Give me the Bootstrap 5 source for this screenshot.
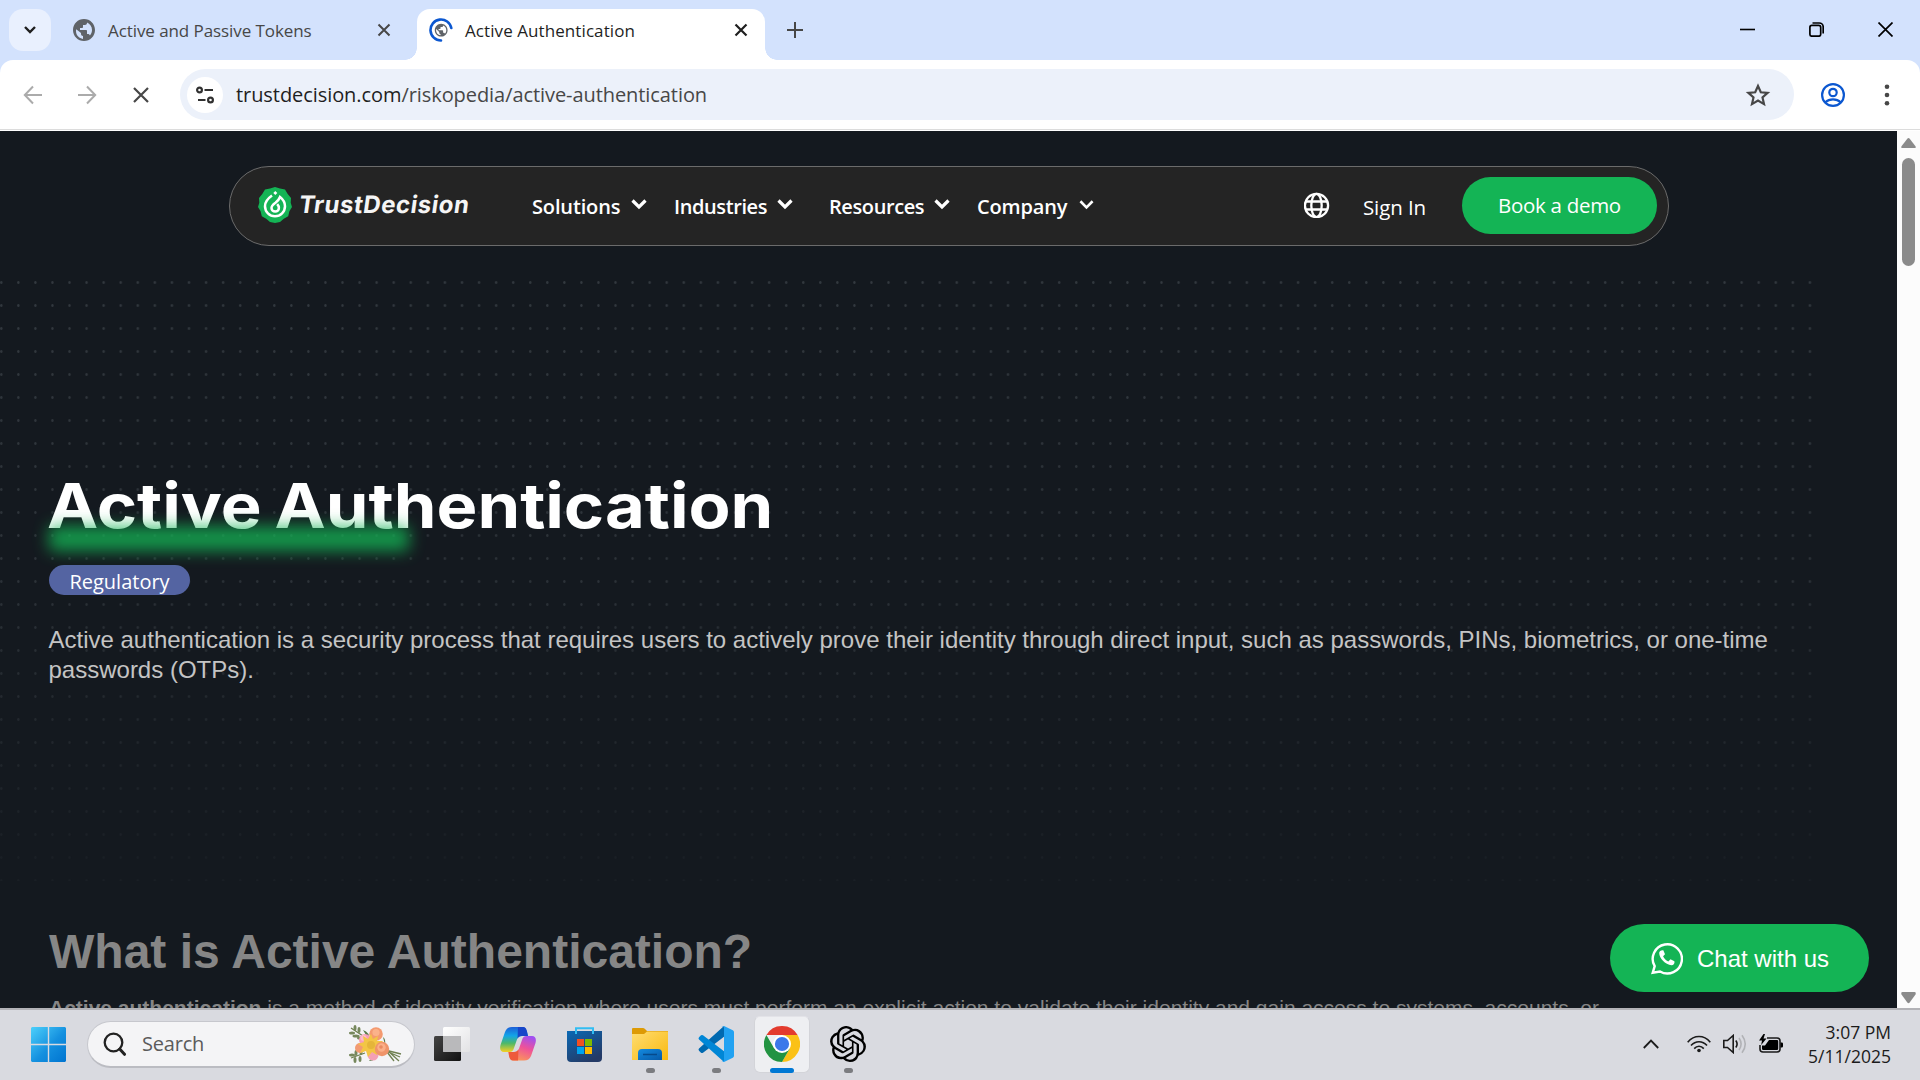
<!DOCTYPE html>
<html lang="en">
<head>
<meta charset="utf-8">
<title>Active Authentication</title>
<link href="https://cdn.jsdelivr.net/npm/bootstrap@5.3.0/dist/css/bootstrap.min.css" rel="stylesheet">
<style>
html,body{height:100%;overflow:hidden}
body{font-family:"Open Sans","Noto Sans",sans-serif;width:1920px;height:1080px;background:#14191f}
svg{display:block;flex:none}
.w-strip{height:60px;background:#d3e2fd;padding-left:9px}
.tab-menu{width:42px;height:42px;margin-top:9px;border-radius:14px;background:#e9f0fe}
.w-tab{height:51px;margin-top:9px;font-size:17px;color:#474747;padding-bottom:9px}
.w-tab span{letter-spacing:-.08px;padding-top:2px}
.tab-one{width:366px;padding-left:21px;padding-right:26px}
.tab-two{width:348px;background:#fff;border-radius:13px 13px 0 0;color:#1f1f1f;position:relative;padding-left:12px;padding-right:17px}
.tab-two span{letter-spacing:.08px}
.tab-two::before,.tab-two::after{content:"";position:absolute;bottom:0;width:12px;height:12px}
.tab-two::before{left:-12px;background:radial-gradient(circle at 0 0,transparent 11.5px,#fff 12px)}
.tab-two::after{right:-12px;background:radial-gradient(circle at 100% 0,transparent 11.5px,#fff 12px)}
.new-tab{margin:22px 0 0 22px}
.w-ctrl{gap:54px;padding-right:27px;padding-bottom:2px}
.w-toolwrap{background:#d3e2fd}
.w-tool{height:70px;background:#fff;border-radius:13px 13px 0 0;border-bottom:1px solid #dcdcdc;padding:0 21px 0 21px}
.w-tool>svg{margin-right:30px}
.w-tool>svg.profile{margin:0 36px 0 27px}
.omni{width:1614px;height:51px;border-radius:26px;background:#ecf1fa;margin-left:-3px;padding-left:7px;padding-right:23px;font-size:20px;color:#474747}
.omni b{font-weight:400;color:#1f1f1f}
.omni .addr{letter-spacing:-.07px;margin-left:13px}
.site-info{width:36px;height:36px;border-radius:50%;background:#fff}
.w-page{height:878px;border-top:1px solid #fff}
.doc{width:1897px;background:#14191f;position:relative;overflow:hidden}
.scroller{width:23px;background:#fcfcfc;padding:7px 0 4px}
.thumb{width:13px;height:108px;border-radius:7px;background:#8b8b8b;margin-top:10px}
.site-nav{width:1440px;height:80px;margin:35px 0 0 229px;border:1px solid #6b6b6b;border-radius:40px;background:#242424;color:#fff;padding:0 11px 2px 28px}
.logo-word{font-family:"Inter",sans-serif;font-weight:700;font-size:24px;letter-spacing:.55px;margin-left:7px;width:233px;line-height:34px;color:#f5f5f5;white-space:nowrap}
.logo-word span{display:inline-block;transform:skewX(-8deg)}
.menu-item{font-weight:600;font-size:20px}
.menu-item span{padding-top:4px;letter-spacing:-.4px}
.mi-a{width:142px}.mi-a span{width:99px}
.mi-b{width:155px}.mi-b span{width:103px}
.mi-c{width:148px}.mi-c span{width:105px}
.mi-d{width:125px}.mi-d span{width:102px}
.mi-a span,.mi-d span{letter-spacing:-.15px}
.sign-in{font-size:20.5px;letter-spacing:-.1px;margin:4px 36px 0 33px}
.demo-btn{width:195px;height:57px;border-radius:29px;background:#14b455;color:#fff;font-size:20.5px;letter-spacing:-.3px}
.dots{position:absolute;left:0;top:140px;width:1813px;height:610px;background-image:radial-gradient(ellipse 1.6px 2px at 1.3px 11.5px,#33393f 45%,transparent 100%);background-size:17.07px 23px;-webkit-mask-image:linear-gradient(#000,#000c 50%,#0003 97%);mask-image:linear-gradient(#000,#000c 50%,#0003 97%)}
.hero{margin-top:220px;padding-left:49px;position:relative}
.hero h1{font:700 62px/80px "Inter",sans-serif;word-spacing:-3px;color:#fff;margin:0 0 0 -2px;transform:scaleX(1.107);transform-origin:0 0;width:max-content;white-space:nowrap}
.glow{position:absolute;left:49px;top:60px;width:360px;height:25px;background:#14b455;opacity:.8;filter:blur(8px);border-radius:4px}
.topic{width:141px;height:30px;border-radius:15px;background:#5464a2;color:#fff;font-size:20px;margin-top:19px;padding-top:3px}
.intro{font:24px/30px "Liberation Sans",Arial,sans-serif;color:#c4c4c4;margin:30px 0 0 -.5px;width:1740px}
.what{font:700 48px/56px "Liberation Sans",Arial,sans-serif;color:#868686;margin:239px 0 13px}
.body-copy{font:21px/30px "Liberation Sans",Arial,sans-serif;color:#868686;white-space:nowrap;margin:0}
.chat{position:absolute;left:1610px;top:793px;width:259px;height:68px;border-radius:34px;background:#14b455;color:#fff;font:24px "Liberation Sans",Arial,sans-serif;padding-left:41px;gap:14px}
.chat span{padding-top:2px}
.tb{height:72px;border-top:2px solid #b3b3b7;background:#d9dae0;padding-left:31px;padding-bottom:2px;color:#1b1b1b}
.tb-search{width:328px;height:47px;border-radius:24px;background:#f4f4f6;border:1px solid #c6c7cd;border-bottom:2px solid #bbbcc2;margin-left:21px;margin-right:4px;font-size:20px;color:#5b5b5b;letter-spacing:-.2px;padding:0 12px 0 15px}
.tb-search span{margin-left:15px}
.tb-app{width:66px;height:68px;position:relative}
.tb-app i{position:absolute;bottom:5px;width:9px;height:5px;border-radius:3px;background:#7b7c80}
.tb-app.on::before{content:"";position:absolute;left:5px;top:6px;width:56px;height:57px;border-radius:6px;background:#eeeff2;border:1px solid #d3d4d9;border-top-color:#e3e3e8}
.tb-app.on svg{position:relative}
.tb-app.on i{width:24px;background:#0078d4}
.tray svg{margin-right:12px}
.tray .more{margin-right:28px}
.tray .batt{margin-right:0}
.tb-clock{font-size:17.5px;line-height:24.3px;text-align:right;width:107px;margin-right:29px}
</style>
<script src="https://cdn.jsdelivr.net/npm/bootstrap@5.3.0/dist/js/bootstrap.bundle.min.js"></script>
</head>
<body class="d-flex flex-column m-0">
<header>
<div class="w-strip d-flex align-items-start">
  <div class="tab-menu d-flex align-items-center justify-content-center"><svg width="14" height="10" viewBox="0 0 14 10"><path d="M2 2l5 5 5-5" fill="none" stroke="#1f1f1f" stroke-width="2.4"/></svg></div>
  <div class="w-tab tab-one d-flex align-items-center">
    <svg width="24" height="24" viewBox="0 0 24 24"><path fill="#5f6368" d="M12 1C5.9 1 1 5.900 1 12s4.900 11 11 11 11-4.900 11-11S18.100 1 12 1zm-1 19.930c-3.950-.490-7-3.850-7-7.930 0-.620.080-1.210.210-1.790L9 15v1c0 1.100.9 2 2 2v2.930zm6.900-3.540c-.260-.810-1-1.390-1.900-1.390h-1v-3c0-.550-.450-1-1-1H8v-2h2c.550 0 1-.450 1-1V7h2c1.100 0 2-.9 2-2v-.410c2.930 1.190 5 4.060 5 7.410 0 2.080-.8 3.970-2.100 5.390z"/></svg>
    <span class="ms-2 ps-1">Active and Passive Tokens</span>
    <svg class="ms-auto" width="14" height="14" viewBox="0 0 14 14"><path d="M1.500 1.500l11 11M12.500 1.500l-11 11" stroke="#474747" stroke-width="2"/></svg>
  </div>
  <div class="w-tab tab-two d-flex align-items-center">
    <svg width="24" height="24" viewBox="0 0 24 24"><g transform="translate(4.500 4.500) scale(.64)"><path fill="#5f6368" d="M12 2C6.480 2 2 6.480 2 12s4.480 10 10 10 10-4.480 10-10S17.520 2 12 2zm-1 17.930c-3.950-.490-7-3.850-7-7.930 0-.620.080-1.210.210-1.790L9 15v1c0 1.100.9 2 2 2v1.930zm6.900-2.540c-.260-.810-1-1.390-1.900-1.390h-1v-3c0-.550-.450-1-1-1H8v-2h2c.550 0 1-.450 1-1V7h2c1.100 0 2-.9 2-2v-.410c2.930 1.190 5 4.060 5 7.410 0 2.080-.8 3.970-2.100 5.390z"/></g><path d="M12 22.500A10.500 10.500 0 1 1 22.300 10" fill="none" stroke="#0b57d0" stroke-width="2.600" stroke-linecap="round"/></svg>
    <span class="ms-2 ps-1">Active Authentication</span>
    <svg class="ms-auto" width="14" height="14" viewBox="0 0 14 14"><path d="M1.500 1.500l11 11M12.500 1.500l-11 11" stroke="#1f1f1f" stroke-width="2.200"/></svg>
  </div>
  <svg class="new-tab" width="16" height="16" viewBox="0 0 16 16"><path d="M8 0v16M0 8h16" stroke="#474747" stroke-width="2"/></svg>
  <div class="w-ctrl d-flex align-items-center ms-auto h-100">
    <svg width="15" height="15"><path d="M0 7.500h15" stroke="#000" stroke-width="1.600"/></svg>
    <svg width="15" height="15" viewBox="0 0 15 15" fill="none" stroke="#000" stroke-width="1.700"><rect x=".9" y="3.400" width="10.800" height="10.800" rx="2"/><path d="M3.500 1h6.700A4 4 0 0 1 14.200 5v6.500"/></svg>
    <svg width="15" height="15" viewBox="0 0 15 15"><path d="M.5.5l14 14M14.500.5l-14 14" stroke="#000" stroke-width="1.700"/></svg>
  </div>
</div>
<div class="w-toolwrap"><div class="w-tool d-flex align-items-center">
  <svg width="24" height="24" viewBox="0 0 24 24" fill="none" stroke="#ababab" stroke-width="2"><path d="M21 12H4M12 3.500L3.800 12l8.200 8.500"/></svg>
  <svg width="24" height="24" viewBox="0 0 24 24" fill="none" stroke="#ababab" stroke-width="2"><path d="M3 12h17M12 3.500l8.200 8.500-8.200 8.500"/></svg>
  <svg width="24" height="24" viewBox="0 0 24 24" fill="none" stroke="#474747" stroke-width="2.200"><path d="M5 5l14 14M19 5L5 19"/></svg>
  <div class="omni d-flex align-items-center">
    <div class="site-info d-flex align-items-center justify-content-center"><svg width="20" height="18" viewBox="0 0 20 18" fill="none" stroke="#303030" stroke-width="2.200"><circle cx="4.500" cy="4" r="2.400"/><path d="M9.500 4H18M3 14h7.500"/><circle cx="15.500" cy="14" r="2.400"/></svg></div>
    <div class="addr"><b>trustdecision.com</b>/riskopedia/active-authentication</div>
    <svg class="ms-auto" width="26" height="24" viewBox="0 0 26 24"><path d="M13 3l2.800 6.300 6.800.6-5.100 4.500 1.500 6.700-6-3.500-6 3.500 1.500-6.700-5.100-4.500 6.800-.6z" fill="none" stroke="#474747" stroke-width="2.200"/></svg>
  </div>
  <svg class="profile" width="24" height="24" viewBox="0 0 24 24" fill="none" stroke="#0b57d0" stroke-width="2.200"><circle cx="12" cy="12" r="10.900"/><circle cx="12" cy="9.500" r="3.700"/><path d="M4.400 19.300c4-4 11.200-4 15.200 0"/></svg>
  <svg class="m-0" width="12" height="24" viewBox="0 0 12 24" fill="#474747"><circle cx="6" cy="3.700" r="2.300"/><circle cx="6" cy="12" r="2.300"/><circle cx="6" cy="20.300" r="2.300"/></svg>
</div></div>
</header>

<div class="w-page d-flex">
<main class="doc">
  <div class="dots"></div>
  <nav class="site-nav d-flex align-items-center position-relative">
    <svg width="34" height="36" viewBox="0 0 34 36"><path fill="#14b455" d="M17 0l5 1.600 5 .9 2.700 4.500L33 11l-.3 4.700L34 20l-2.600 4.300-1.200 5-4.400 2.400L22 35l-5 1-5-1-3.800-3.300-4.400-2.400-1.200-5L0 20l1.300-4.300L1 11l3.300-4L7 2.500l5-.9z"/><g fill="none" stroke="#fff" stroke-width="2.500"><path d="M14 8.600C9.500 11.800 7 15 7 19.200a10 10 0 0 0 20 0c0-3.700-2-6.800-5-9.200-.9 2.600-2.300 4-4.500 5.700-2.200 1.600-4 3-4 5.200a3.700 3.700 0 0 0 7.400 0c0-1.400-.6-2.600-1.700-3.800"/></g><path fill="#fff" d="M17.300 4l2 2-2 2-2-2z"/></svg>
    <div class="logo-word"><span>TrustDecision</span></div>
    <div class="menu-item mi-a d-flex align-items-center"><span>Solutions</span><svg width="16" height="12" viewBox="0 0 16 12"><path d="M1.500 1.500L8 8l6.500-6.500" fill="none" stroke="#fff" stroke-width="3.200"/></svg></div>
    <div class="menu-item mi-b d-flex align-items-center"><span>Industries</span><svg width="16" height="12" viewBox="0 0 16 12"><path d="M1.500 1.500L8 8l6.500-6.500" fill="none" stroke="#fff" stroke-width="3.200"/></svg></div>
    <div class="menu-item mi-c d-flex align-items-center"><span>Resources</span><svg width="16" height="12" viewBox="0 0 16 12"><path d="M1.500 1.500L8 8l6.500-6.500" fill="none" stroke="#fff" stroke-width="3.200"/></svg></div>
    <div class="menu-item mi-d d-flex align-items-center"><span>Company</span><svg width="15" height="12" viewBox="0 0 16 12"><path d="M1.500 2L8 8.500 14.500 2" fill="none" stroke="#fff" stroke-width="2.700"/></svg></div>
    <div class="d-flex align-items-center ms-auto">
      <svg width="26" height="26" viewBox="0 0 26 26" fill="none" stroke="#fff" stroke-width="2.300"><circle cx="12.500" cy="13.500" r="11.600"/><ellipse cx="12.500" cy="13.500" rx="5.200" ry="11.600"/><path d="M2 9.500h21M2 17.500h21"/></svg>
      <div class="sign-in">Sign In</div>
      <div class="demo-btn d-flex align-items-center justify-content-center">Book a demo</div>
    </div>
  </nav>
  <section class="hero">
    <h1>Active Authentication</h1>
    <div class="glow"></div>
    <div class="topic d-flex align-items-center justify-content-center">Regulatory</div>
    <p class="intro">Active authentication is a security process that requires users to actively prove their identity through direct input, such as passwords, PINs, biometrics, or one-time passwords (OTPs).</p>
    <h2 class="what">What is Active Authentication?</h2>
    <p class="body-copy"><b>Active authentication</b> is a method of identity verification where users must perform an explicit action to validate their identity and gain access to systems, accounts, or</p>
  </section>
  <div class="chat d-flex align-items-center">
    <svg width="32" height="33" viewBox="0 0 32 33"><path d="M1.700 30.800l2-6.600A14.600 14.600 0 1 1 9 29.500z" fill="none" stroke="#fff" stroke-width="2.400"/><path fill="#fff" d="M8.200 11c0 5 6 11.800 12.300 12.200 2.200 0 3.400-2 2.900-4l-3.900-2-2.200 2.200c-2.500-1-4.300-3-5.200-5.200l1.900-2-1.700-4C10 7.900 8.200 9 8.200 11z"/></svg>
    <span>Chat with us</span>
  </div>
</main>
<div class="scroller d-flex flex-column align-items-center">
  <svg width="15" height="10" viewBox="0 0 15 10"><path d="M6.300.8Q7.500-.6 8.700.8l5.800 7.400Q15.300 10 13.500 10h-12Q-.3 10 .5 8.200z" fill="#8b8b8b"/></svg>
  <div class="thumb"></div>
  <svg class="mt-auto" width="15" height="12" viewBox="0 0 15 12"><path d="M6.300 10.600Q7.500 12 8.700 10.600l5.800-8Q15.300 0 13.500 0h-12Q-.3 0 .5 2.600z" fill="#8b8b8b"/></svg>
</div>
</div>

<footer class="tb d-flex align-items-center">
  <svg width="35" height="35" viewBox="0 0 35 35"><defs><linearGradient id="win" x1="0" y1="0" x2="1" y2="1"><stop offset="0" stop-color="#4dd0fb"/><stop offset=".55" stop-color="#1490df"/><stop offset="1" stop-color="#0074d0"/></linearGradient></defs><path fill="url(#win)" d="M1 0h15.800v16.800H0V1zM18.200 0H34l1 1v15.800H18.200zM0 18.200h16.800V35H1l-1-1zM18.200 18.200H35V34l-1 1H18.200z"/></svg>
  <div class="tb-search d-flex align-items-center">
    <svg width="24" height="24" viewBox="0 0 24 24" fill="none" stroke="#222"><circle cx="10.500" cy="10.500" r="8.800" stroke-width="2.300"/><path d="M16.700 17l4.800 5.300" stroke-width="3" stroke-linecap="round"/></svg>
    <span>Search</span>
    <svg class="ms-auto" width="53" height="38" viewBox="0 0 53 38">
      <g stroke="#6f8050" stroke-width="1.300" fill="none"><path d="M2 3l15 10M2 33l14-5M38 25l12 11M37 26l14 6M36 25l16 4M38 27l7 9"/></g>
      <g fill="#76875c"><ellipse cx="3" cy="8" rx="3" ry="1.500"/><ellipse cx="6" cy="3" rx="1.500" ry="3"/><ellipse cx="10" cy="5" rx="1.500" ry="3"/><ellipse cx="7" cy="11" rx="3.500" ry="1.500"/><ellipse cx="11" cy="13" rx="3" ry="1.500"/><ellipse cx="3" cy="30" rx="3" ry="1.500"/><ellipse cx="7" cy="28" rx="1.500" ry="3"/><ellipse cx="12" cy="27" rx="1.500" ry="3"/><ellipse cx="6" cy="35" rx="1.500" ry="3"/><ellipse cx="11" cy="34" rx="1.500" ry="3"/></g>
      <path fill="#587b49" d="M14 5q7 2 6 10zM20 36q8 0 7-8zM34 12q3 2 2 8z"/>
      <circle cx="27" cy="9" r="6.800" fill="#f49a70"/><circle cx="27" cy="7.500" r="3.600" fill="#fbb28a"/><circle cx="16" cy="15" r="6" fill="#f79fb8"/><circle cx="14.500" cy="13" r="3" fill="#fdbccc"/><circle cx="11" cy="23" r="5" fill="#f29a72"/><circle cx="24" cy="30" r="5.500" fill="#f4a0b5"/>
      <path fill="#f3c545" d="M22 9l2 5 5-3-1 5 6 0-4 4 4 4-6 0 0 6-5-3-4 5-2-6-6 2 3-6-5-3 6-2-1-6 5 3z"/><circle cx="22" cy="20" r="4" fill="#d8a52f" opacity=".5"/>
      <circle cx="33" cy="24" r="7.200" fill="#ef946a"/><circle cx="32.500" cy="22.500" r="4.200" fill="#fbaf88"/><circle cx="32" cy="22" r="1.800" fill="#e98b60"/>
    </svg>
  </div>
  <div class="tb-app d-flex align-items-center justify-content-center"><svg width="36" height="35" viewBox="0 0 36 35"><defs><linearGradient id="tvd" x1="0" y1="0" x2="1" y2="1"><stop offset="0" stop-color="#444"/><stop offset="1" stop-color="#111"/></linearGradient><linearGradient id="tvl" x1="0" y1="0" x2="1" y2="1"><stop offset="0" stop-color="#fff"/><stop offset="1" stop-color="#e2e2e4"/></linearGradient></defs><rect x="0" y="9" width="27" height="25" rx="1.500" fill="url(#tvd)"/><rect x="9" y="0" width="27" height="25" rx="1.500" fill="url(#tvl)"/><path d="M9 9h18v16H10.500Q9 25 9 23.500z" fill="#b9b9bb"/></svg></div>
  <div class="tb-app d-flex align-items-center justify-content-center"><svg width="36" height="34" viewBox="0 0 36 34"><defs><linearGradient id="cpa" x1="0" y1="0" x2="0" y2="1"><stop offset="0" stop-color="#1d5fd8"/><stop offset=".35" stop-color="#12a5e8"/><stop offset=".65" stop-color="#4db86a"/><stop offset="1" stop-color="#f6d022"/></linearGradient><linearGradient id="cpb" x1=".7" y1="0" x2=".3" y2="1"><stop offset="0" stop-color="#a04ff0"/><stop offset=".45" stop-color="#ee5299"/><stop offset="1" stop-color="#fb9a55"/></linearGradient></defs>
    <path d="M12 0H22C25 0 26 2 27 5L28 9H22c-3 0-4.500 1.500-5.200 4L14 21c-.8 2.500-2 4-4.500 4H4C.5 25-.5 22 .5 18L5 5C6.300 1.500 8.500 0 12 0z" fill="url(#cpa)"/><path d="M18 0h5c2.500 0 3.500 2 4 4.500L28 9h-6c-2.500 0-3.700 1-4.500 3z" fill="#1746c9"/>
    <path d="M24 33.500H14c-3 0-4-2-5-5L8.500 25H14c3 0 4.500-1.500 5.200-4L22 13c.8-2.500 2-4 4.500-4H32c3.500 0 4.500 3 3.500 7l-4.500 13c-1.300 3-3.500 4.500-7 4.500z" fill="url(#cpb)"/><path d="M18 33.500h-5c-2.500 0-3.500-2-4-4.500L8.500 25H14c2.500 0 3.700-1 4.500-3z" fill="#ee5a3c"/></svg></div>
  <div class="tb-app d-flex align-items-center justify-content-center"><svg width="35" height="35" viewBox="0 0 35 35"><defs><linearGradient id="st" x1="0" y1="0" x2=".6" y2="1"><stop offset="0" stop-color="#0a69b5"/><stop offset="1" stop-color="#243a66"/></linearGradient></defs><path d="M0 4h35v27q0 4-4 4H4q-4 0-4-4z" fill="url(#st)"/><path d="M9 7V1.200h17V7" fill="none" stroke="#32bdf2" stroke-width="2"/><path fill="#f25022" d="M10 12h7v7h-7z"/><path fill="#7fba00" d="M18 12h7v7h-7z"/><path fill="#00a4ef" d="M10 20h7v7h-7z"/><path fill="#ffb900" d="M18 20h7v7h-7z"/></svg></div>
  <div class="tb-app d-flex align-items-center justify-content-center"><svg width="36" height="34" viewBox="0 0 36 34"><defs><linearGradient id="fo" x1="0" y1="0" x2="1" y2="1"><stop offset="0" stop-color="#ffdd72"/><stop offset="1" stop-color="#f9b90f"/></linearGradient><linearGradient id="fb" x1="0" y1="0" x2="1" y2="1"><stop offset="0" stop-color="#148be0"/><stop offset="1" stop-color="#0659a8"/></linearGradient></defs><path fill="#dd9a05" d="M0 2q0-1 1-1h10q1 0 2 1l2 2h21v6H0z"/><path fill="url(#fo)" d="M0 7h12l3-2.500h21V33H0z"/><path fill="url(#fb)" d="M6 33V26q0-4 4-4h16q4 0 4 4v7z"/><path d="M11 27.500h14" stroke="#064a8b" stroke-width="1.500"/></svg><i></i></div>
  <div class="tb-app d-flex align-items-center justify-content-center"><svg width="36" height="36" viewBox="0 0 36 36"><path fill="#0069b0" d="M26 0L1 22.500q-1 1 0 2.200l2 2q1 .8 2 0L27 10z"/><path fill="#0086d6" d="M26 36L1 13.500q-1-1 0-2.200l2-2q1-.8 2 0L27 26z"/><path fill="#22a2f2" d="M26 0l8.800 4.300q1.200.6 1.200 2v23.400q0 1.400-1.200 2L26 36q-1.500.3-2.400-.6c1 .8 2.400 0 2.400-1.400V2c0-1.400-1.400-2.200-2.400-1.400z"/></svg><i></i></div>
  <div class="tb-app on d-flex align-items-center justify-content-center"><svg width="36" height="36" viewBox="0 0 36 36"><path d="M2.410 9A18 18 0 0 1 33.590 9H18z" fill="#e33b2e"/><path d="M33.590 9A18 18 0 0 1 18 36l7.800-13.500L18 9z" fill="#fbc116"/><path d="M18 36A18 18 0 0 1 2.410 9l7.800 13.500 15.590 0z" fill="#229342"/><circle cx="18" cy="18" r="9" fill="#fff"/><circle cx="18" cy="18" r="7.100" fill="#3b78ea"/></svg><i></i></div>
  <div class="tb-app d-flex align-items-center justify-content-center"><svg width="36" height="36" viewBox="0 0 24 24"><path d="M22.2819 9.8211a5.9847 5.9847 0 0 0-.5157-4.9108 6.0462 6.0462 0 0 0-6.5098-2.9A6.0651 6.0651 0 0 0 4.9807 4.1818a5.9847 5.9847 0 0 0-3.9977 2.9 6.0462 6.0462 0 0 0 .7427 7.0966 5.98 5.98 0 0 0 .511 4.9107 6.051 6.051 0 0 0 6.5146 2.9001A5.9847 5.9847 0 0 0 13.2599 24a6.0557 6.0557 0 0 0 5.7718-4.2058 5.9894 5.9894 0 0 0 3.9977-2.9001 6.0557 6.0557 0 0 0-.7475-7.0729zm-9.022 12.6081a4.4755 4.4755 0 0 1-2.8764-1.0408l.1419-.0804 4.7783-2.7582a.7948.7948 0 0 0 .3927-.6813v-6.7369l2.02 1.1686a.071.071 0 0 1 .038.052v5.5826a4.504 4.504 0 0 1-4.4945 4.4944zm-9.6607-4.1254a4.4708 4.4708 0 0 1-.5346-3.0137l.142.0852 4.783 2.7582a.7712.7712 0 0 0 .7806 0l5.8428-3.3685v2.3324a.0804.0804 0 0 1-.0332.0615L9.74 19.9502a4.4992 4.4992 0 0 1-6.1408-1.6464zM2.3408 7.8956a4.485 4.485 0 0 1 2.3655-1.9728V11.6a.7664.7664 0 0 0 .3879.6765l5.8144 3.3543-2.0201 1.1685a.0757.0757 0 0 1-.071 0l-4.8303-2.7865A4.504 4.504 0 0 1 2.3408 7.872zm16.5963 3.8558L13.1038 8.364 15.1192 7.2a.0757.0757 0 0 1 .071 0l4.8303 2.7913a4.4944 4.4944 0 0 1-.6765 8.1042v-5.6772a.79.79 0 0 0-.407-.667zm2.0107-3.0231l-.142-.0852-4.7735-2.7818a.7759.7759 0 0 0-.7854 0L9.409 9.2297V6.8974a.0662.0662 0 0 1 .0284-.0615l4.8303-2.7866a4.4992 4.4992 0 0 1 6.6802 4.66zM8.3065 12.863l-2.02-1.1638a.0804.0804 0 0 1-.038-.0567V6.0742a4.4992 4.4992 0 0 1 7.3757-3.4537l-.142.0805L8.704 5.459a.7948.7948 0 0 0-.3927.6813zm1.0976-2.3654l2.602-1.4998 2.6069 1.4998v2.9994l-2.5974 1.4997-2.6067-1.4997Z"/></svg><i></i></div>
  <div class="tray d-flex align-items-center ms-auto">
    <svg class="more" width="16" height="10" viewBox="0 0 16 10"><path d="M.8 9L8 1.600 15.200 9" fill="none" stroke="#1b1b1b" stroke-width="1.800"/></svg>
    <svg width="24" height="18" viewBox="0 0 24 18" fill="none" stroke="#1b1b1b" stroke-width="1.600"><path d="M.7 7.200c6.500-7.600 16.100-7.600 22.600 0M4 10.600c4.500-5.200 11.500-5.200 16 0M7.200 13.600c2.800-3.200 6.800-3.200 9.600 0"/><circle cx="12" cy="15.500" r="1.800" fill="#1b1b1b" stroke="none"/></svg>
    <svg width="24" height="20" viewBox="0 0 24 20" fill="none" stroke="#1b1b1b" stroke-width="1.600"><path d="M.8 6.500h3.700L10.200 1.500v17L4.500 13.500H.8zM12.800 6.500q2.600 3.500 0 7"/><path d="M16 4q4.200 6 0 12M19 1.200q6.500 8.800 0 17.600" stroke="#b1b2b6"/></svg>
    <svg class="batt" width="25" height="20" viewBox="0 0 25 20"><path d="M8 4h10q3 0 3 3v8q0 3-3 3H4q-3 0-3-3v-4" fill="none" stroke="#1b1b1b" stroke-width="1.600"/><path d="M10 6h8q1.200 0 1.200 1.200v7.600Q19.200 16 18 16H4.200Q3 16 3 14.800V11.500h3zM21.500 8.500h1.300q1.200 0 1.200 1.200v2.600q0 1.200-1.200 1.200h-1.300z"/><path d="M4.500 0L0 6.500h3L2.200 11 7.500 4.500h-3L6 0z"/></svg>
    <div class="tb-clock">3:07 PM<br>5/11/2025</div>
  </div>
</footer>
</body>
</html>
